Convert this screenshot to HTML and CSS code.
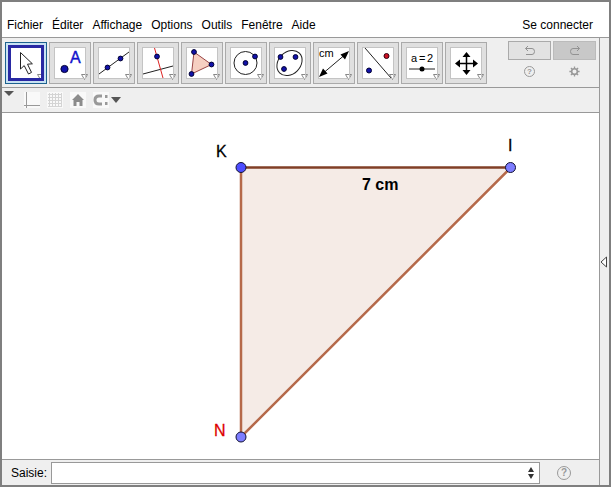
FILE: index.html
```html
<!DOCTYPE html>
<html lang="fr">
<head>
    <meta charset="UTF-8">
    <meta name="viewport" content="width=device-width, initial-scale=1.0">
    <title>GeoGebra</title>
    <link rel="stylesheet" href="styles.css">
</head>
<body>
    <div class="app">
        <!-- Menu -->
        <header class="menubar">
            <nav class="menu">
                <a href="#">Fichier</a>
                <a href="#">Éditer</a>
                <a href="#">Affichage</a>
                <a href="#">Options</a>
                <a href="#">Outils</a>
                <a href="#">Fenêtre</a>
                <a href="#">Aide</a>
            </nav>
            <a class="login" href="#">Se connecter</a>
        </header>

        <div class="workspace">
            <main class="main">
                <!-- Toolbar -->
                <div class="toolbar">
                    <div class="tools">
                        <button class="tool selected" aria-label="Déplacer">
                            <svg viewBox="0 0 32 32">
                                <path d="M10.500 5.500V22l3.700-3.400 4.300 8.400 3-1.600-4-8.200 4.900-.4z" fill="#fff" stroke="#222"/>
                                <path class="more" d="M27.500 27.500h6l-3 5z"/>
                            </svg>
                        </button>
                        <button class="tool" aria-label="Point">
                            <svg viewBox="0 0 32 32">
                                <circle class="pt" cx="10.500" cy="22" r="3.600"/>
                                <text class="name" x="16" y="16">A</text>
                                <path class="more" d="M27.500 27.500h6l-3 5z"/>
                            </svg>
                        </button>
                        <button class="tool" aria-label="Droite">
                            <svg viewBox="0 0 32 32">
                                <path class="line" d="M1 27L31 5"/>
                                <circle class="pt" cx="9.500" cy="20.500" r="2.400"/>
                                <circle class="pt" cx="22.500" cy="11.500" r="2.400"/>
                                <path class="more" d="M27.500 27.500h6l-3 5z"/>
                            </svg>
                        </button>
                        <button class="tool" aria-label="Perpendiculaire">
                            <svg viewBox="0 0 32 32">
                                <path class="line" d="M1 27L31 19"/>
                                <path d="M12.500 1l8.500 30" stroke="#d22" fill="none"/>
                                <circle class="pt" cx="15" cy="9.500" r="2.400"/>
                                <path class="more" d="M27.500 27.500h6l-3 5z"/>
                            </svg>
                        </button>
                        <button class="tool" aria-label="Polygone">
                            <svg viewBox="0 0 32 32">
                                <path d="M8 5L25.500 17.500 5.500 27z" fill="#f6cfc2" stroke="#944"/>
                                <circle class="pt" cx="8" cy="5" r="2.400"/>
                                <circle class="pt" cx="25.500" cy="17.500" r="2.400"/>
                                <circle class="pt" cx="5.500" cy="27" r="2.400"/>
                                <path class="more" d="M27.500 27.500h6l-3 5z"/>
                            </svg>
                        </button>
                        <button class="tool" aria-label="Cercle">
                            <svg viewBox="0 0 32 32">
                                <circle class="line" cx="15.500" cy="16" r="11.500"/>
                                <circle class="pt" cx="15.500" cy="16" r="2.400"/>
                                <circle class="pt" cx="25" cy="9.500" r="2.400"/>
                                <path class="more" d="M27.500 27.500h6l-3 5z"/>
                            </svg>
                        </button>
                        <button class="tool" aria-label="Ellipse">
                            <svg viewBox="0 0 32 32">
                                <ellipse class="line" cx="15.500" cy="16" rx="14" ry="11" transform="rotate(-45 15.500 16)"/>
                                <circle class="pt" cx="6.500" cy="10" r="2.400"/>
                                <circle class="pt" cx="21.500" cy="10" r="2.400"/>
                                <circle class="pt" cx="10" cy="22" r="2.400"/>
                                <path class="more" d="M27.500 27.500h6l-3 5z"/>
                            </svg>
                        </button>
                        <button class="tool" aria-label="Distance">
                            <svg viewBox="0 0 32 32">
                                <text x="1" y="10">cm</text>
                                <path class="line" d="M3 28L29 6"/>
                                <path d="M1 30l4-8.500 4.500 5zM31 4l-4 8.500-4.500-5z"/>
                                <path class="more" d="M27.500 27.500h6l-3 5z"/>
                            </svg>
                        </button>
                        <button class="tool" aria-label="Symétrie">
                            <svg viewBox="0 0 32 32">
                                <path class="line" d="M3 1l26 30"/>
                                <circle class="pt" cx="7" cy="23.500" r="2.500"/>
                                <circle cx="24.500" cy="9" r="2.500" fill="#c12" stroke="#301"/>
                                <path class="more" d="M27.500 27.500h6l-3 5z"/>
                            </svg>
                        </button>
                        <button class="tool" aria-label="Curseur">
                            <svg viewBox="0 0 32 32">
                                <text x="5" y="15">a</text>
                                <text x="13" y="15">=</text>
                                <text x="21" y="15">2</text>
                                <path class="line" d="M3 22h26"/>
                                <circle cx="16" cy="22" r="2.500"/>
                                <path class="more" d="M27.500 27.500h6l-3 5z"/>
                            </svg>
                        </button>
                        <button class="tool" aria-label="Déplacer la vue">
                            <svg viewBox="0 0 32 32">
                                <path d="M7 16.500h19M16.500 7v19" stroke="#000" stroke-width="1.500"/>
                                <path d="M16.500 5l4 5h-8zM16.500 28l4-5h-8zM5 16.500l5-4v8zM28 16.500l-5-4v8z"/>
                                <path class="more" d="M27.500 27.500h6l-3 5z"/>
                            </svg>
                        </button>
                    </div>
                    <div class="actions">
                        <button class="history" aria-label="Annuler">
                            <svg viewBox="0 0 12 10"><path d="M4 0L1.500 2.500 4 5M1.500 2.500H8q2.500 0 2.500 3T8 8.500H2"/></svg>
                        </button>
                        <button class="history redo" aria-label="Refaire">
                            <svg viewBox="0 0 12 10"><path d="M8 0l2.500 2.500L8 5M10.500 2.500H4Q1.500 2.500 1.500 5.500T4 8.500h6"/></svg>
                        </button>
                        <button class="small" aria-label="Aide"><span class="question">?</span></button>
                        <button class="small" aria-label="Préférences">
                            <svg viewBox="0 0 14 14"><circle cx="7" cy="7" r="3.600" stroke-width="2"/><path d="M7 .5v3M7 10.500v3M.5 7h3M10.500 7h3M2.400 2.400l2 2M9.600 9.600l2 2M2.400 11.600l2-2M9.600 4.400l2-2" stroke-width="1.700"/></svg>
                        </button>
                    </div>
                </div>

                <!-- Style bar -->
                <div class="stylebar">
                    <button class="fold" aria-label="Barre de style">
                        <svg viewBox="0 0 10 6"><path d="M0 0h10L5 5z" fill="#555"/></svg>
                    </button>
                    <button class="style" aria-label="Axes">
                        <svg viewBox="0 0 16 16"><path d="M2.500 0v16M0 13.500h16" stroke="#999"/></svg>
                    </button>
                    <button class="style" aria-label="Grille">
                        <svg viewBox="0 0 16 16"><path d="M2.500 1v14M5.500 1v14M8.500 1v14M11.500 1v14M14.500 1v14M1 2.500h14M1 5.500h14M1 8.500h14M1 11.500h14M1 14.500h14" stroke="#d4d4d4"/></svg>
                    </button>
                    <button class="style" aria-label="Vue standard">
                        <svg viewBox="0 0 16 16"><path d="M8 2l6 6h-1.500v6h-3v-4h-3v4h-3V8H2z" fill="#8c8c8c"/></svg>
                    </button>
                    <button class="style" aria-label="Capture">
                        <svg viewBox="0 0 16 16"><path d="M9 4H6Q2 4 2 8t4 4h3" fill="none" stroke="#999" stroke-width="3"/><path d="M12 3h2.500v3H12zM12 10h2.500v3H12z" fill="#999"/></svg>
                    </button>
                    <button class="drop" aria-label="Options de capture">
                        <svg viewBox="0 0 10 6"><path d="M0 0h10L5 6z" fill="#555"/></svg>
                    </button>
                </div>

                <!-- Drawing area -->
                <svg class="canvas">
                    <path d="M239 55h269.500L239 324z" fill="#f5ebe6"/>
                    <path d="M239 55v269L508.500 55" fill="none" stroke="#b5694a" stroke-width="2.500"/>
                    <path d="M239 54.500h269.500" stroke="#813f26" stroke-width="2.500"/>
                    <circle cx="239" cy="54.500" r="5" fill="#4d4dff" stroke="#113"/>
                    <circle cx="508.500" cy="54.500" r="5" fill="#7d7dff" stroke="#113"/>
                    <circle cx="239" cy="324" r="5" fill="#7d7dff" stroke="#113"/>
                    <text x="214" y="44">K</text>
                    <text x="506" y="38">I</text>
                    <text class="dependent" x="212" y="323">N</text>
                    <text class="measure" x="360" y="77">7 cm</text>
                </svg>

                <!-- Input bar -->
                <form class="inputbar">
                    <label for="saisie">Saisie:</label>
                    <div class="field">
                        <input type="text" id="saisie">
                        <button type="button" class="recall" aria-label="Historique">
                            <svg viewBox="0 0 6 12"><path d="M0 5l3-5 3 5zM0 7l3 5 3-5z" fill="#333"/></svg>
                        </button>
                    </div>
                    <button type="button" class="help" aria-label="Aide à la saisie"><span class="question">?</span></button>
                </form>
            </main>

            <aside class="sidebar">
                <button aria-label="Ouvrir le panneau">
                    <svg viewBox="0 0 8 12"><path d="M6.500 1v10L1 6z" fill="#fff" stroke="#444"/></svg>
                </button>
            </aside>
        </div>
    </div>
</body>
</html>
```

FILE: styles.css
```css
* {
    box-sizing: border-box;
}

body {
    margin: 0;
    font-family: "Liberation Sans", Arial, sans-serif;
    font-size: 12px;
    color: #000;
    background: #fff;
}

button {
    display: flex;
    align-items: center;
    justify-content: center;
    flex-shrink: 0;
    margin: 0;
    padding: 0;
    border: none;
    font-family: inherit;
    background: none;
    cursor: pointer;
}

a {
    color: #000;
    text-decoration: none;
}

.app {
    display: flex;
    flex-direction: column;
    min-height: 100vh;
    border: 2px solid #7f7f7f;
}

/* Menu */
.menubar {
    display: flex;
    justify-content: space-between;
    height: 36px;
    padding: 16px 16px 0 5px;
    border-bottom: 1px solid #999;
}

.menu {
    display: flex;
    gap: 9px;
}

.workspace {
    display: flex;
    flex: 1;
}

.main {
    display: flex;
    flex-direction: column;
    flex: 1;
    min-width: 0;
}

/* Toolbar */
.toolbar {
    display: flex;
    justify-content: space-between;
    height: 50px;
    padding: 3px 3px 0;
    background: #efefef;
    border-bottom: 1px solid #999;
}

.tools {
    display: flex;
    gap: 2px;
    padding-top: 1px;
}

.tool {
    width: 42px;
    height: 42px;
    border: 1px solid #aaa;
    background: #e0e0e0;
}

.tool svg {
    width: 32px;
    height: 32px;
    overflow: visible;
    background: #fff;
    outline: 1px solid #c4c4c4;
    outline-offset: -1px;
}

.tool.selected {
    border-color: #1d628f;
    background: #c8e2f3;
}

.tool.selected svg {
    outline: 3px solid #2929a3;
    outline-offset: -1px;
}

.tool text {
    font-size: 11px;
}

.tool .name {
    font-size: 16px;
    fill: #11c;
    stroke: #11c;
    stroke-width: 0.4;
}

.line {
    fill: none;
    stroke: #222;
}

.pt {
    fill: #11a;
    stroke: #003;
}

.more {
    fill: #fff;
    stroke: #888;
}

.actions {
    display: grid;
    grid-template-columns: 43px 43px;
    grid-template-rows: 19px 19px;
    gap: 2px;
}

.history {
    border: 1px solid #aaa;
    background: #e2e2e2;
}

.history.redo {
    border-color: #bbb;
    background: #c8c8c8;
}

.history svg {
    width: 12px;
    height: 10px;
    fill: none;
    stroke: #929292;
}

.small svg {
    width: 11px;
    height: 11px;
    fill: none;
    stroke: #999;
}

/* Circled question mark */
.question {
    width: 11px;
    height: 11px;
    border: 1px solid #999;
    border-radius: 50%;
    color: #999;
    font-size: 8px;
    font-weight: bold;
    line-height: 9px;
    text-align: center;
}

.help .question {
    width: 14px;
    height: 14px;
    font-size: 10px;
    line-height: 12px;
}

/* Style bar */
.stylebar {
    display: flex;
    align-items: center;
    gap: 7px;
    height: 25px;
    padding-left: 2px;
    background: #efefef;
    border-bottom: 1px solid #999;
}

.fold {
    align-self: flex-start;
    margin: 3px 3px 0 0;
}

.fold svg,
.drop svg {
    width: 10px;
    height: 6px;
}

.drop {
    margin-left: -5px;
}

.style svg {
    width: 16px;
    height: 16px;
    background: #f9f9f9;
}

/* Drawing area */
.canvas {
    flex: 1;
    width: 100%;
    min-height: 340px;
    background: #fff;
}

.canvas text {
    font-size: 16px;
    stroke: #000;
    stroke-width: 0.3;
}

.canvas .dependent {
    fill: #d00;
    stroke: #d00;
}

.canvas .measure {
    font-weight: bold;
    stroke: none;
}

/* Input bar */
.inputbar {
    display: flex;
    align-items: center;
    height: 26px;
    padding: 0 28px 0 9px;
    background: #efefef;
    border-top: 1px solid #999;
}

.inputbar label {
    width: 40px;
}

.field {
    display: flex;
    flex: 1;
    height: 22px;
    padding-right: 5px;
    border: 1px solid #999;
    background: #fff;
}

.field input {
    flex: 1;
    min-width: 0;
    padding: 0 4px;
    border: none;
    outline: none;
    font: inherit;
    background: none;
}

.recall svg {
    width: 6px;
    height: 12px;
}

.help {
    margin-left: 17px;
}

/* Side strip */
.sidebar {
    display: flex;
    align-items: center;
    width: 10px;
    background: #efefef;
    border-left: 1px solid #999;
}

.sidebar svg {
    width: 8px;
    height: 12px;
}
```
